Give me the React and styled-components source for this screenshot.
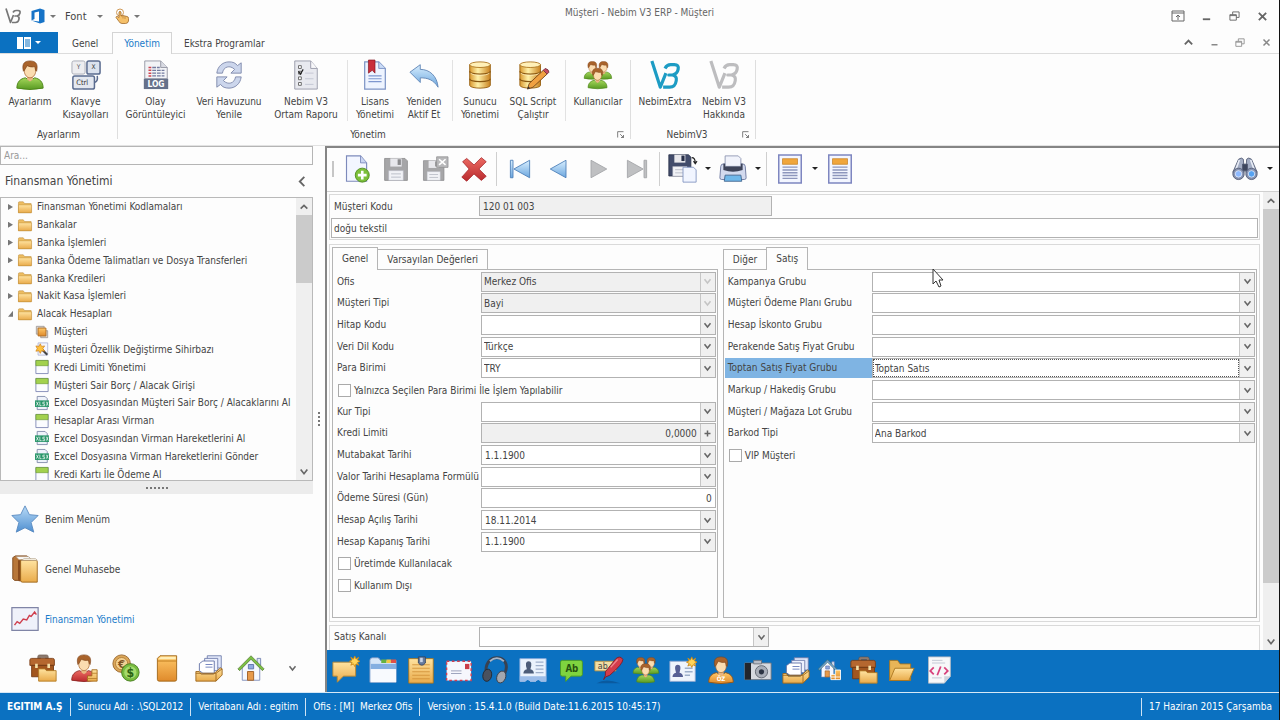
import React, { useState } from "react"
import styled, { createGlobalStyle, css } from "styled-components"

const ribbonGroups = [
    {
        title: "Ayarlarım",
        sections: [[
            { icon: "user", lines: ["Ayarlarım"], width: 54 },
            { icon: "keys", lines: ["Klavye", "Kısayolları"], width: 57 },
        ]],
    },
    {
        title: "Yönetim",
        launcher: true,
        sections: [
            [
                { icon: "log", lines: ["Olay", "Görüntüleyici"], width: 69 },
                { icon: "refresh", lines: ["Veri Havuzunu", "Yenile"], width: 78 },
                { icon: "report", lines: ["Nebim V3", "Ortam Raporu"], width: 76 },
            ],
            [
                { icon: "license", lines: ["Lisans", "Yönetimi"], width: 48 },
                { icon: "undo", lines: ["Yeniden", "Aktif Et"], width: 50 },
            ],
            [
                { icon: "database", lines: ["Sunucu", "Yönetimi"], width: 48 },
                { icon: "databaseEdit", lines: ["SQL Script", "Çalıştır"], width: 58 },
            ],
            [{ icon: "users", lines: ["Kullanıcılar"], width: 58 }],
        ],
    },
    {
        title: "NebimV3",
        launcher: true,
        sections: [[
            { icon: "v3Blue", lines: ["NebimExtra"], width: 62 },
            { icon: "v3Gray", lines: ["Nebim V3", "Hakkında"], width: 56 },
        ]],
    },
]

const treeItems = [
    { icon: "folder", text: "Finansman Yönetimi Kodlamaları" },
    { icon: "folder", text: "Bankalar" },
    { icon: "folder", text: "Banka İşlemleri" },
    { icon: "folder", text: "Banka Ödeme Talimatları ve Dosya Transferleri" },
    { icon: "folder", text: "Banka Kredileri" },
    { icon: "folder", text: "Nakit Kasa İşlemleri" },
    { icon: "folder", text: "Alacak Hesapları", open: true },
    { icon: "cards", text: "Müşteri", child: true },
    { icon: "wizard", text: "Müşteri Özellik Değiştirme Sihirbazı", child: true },
    { icon: "form", text: "Kredi Limiti Yönetimi", child: true },
    { icon: "form", text: "Müşteri Sair Borç / Alacak Girişi", child: true },
    { icon: "xlsx", text: "Excel Dosyasından Müşteri Sair Borç / Alacaklarını Al", child: true },
    { icon: "form", text: "Hesaplar Arası Virman", child: true },
    { icon: "xlsx", text: "Excel Dosyasından Virman Hareketlerini Al", child: true },
    { icon: "xlsx", text: "Excel Dosyasına Virman Hareketlerini Gönder", child: true },
    { icon: "form", text: "Kredi Kartı İle Ödeme Al", child: true },
]

const navItems = [
    { icon: "star", text: "Benim Menüm" },
    { icon: "books", text: "Genel Muhasebe" },
    { icon: "chart", text: "Finansman Yönetimi", active: true },
]

const shortcuts = ["briefcase", "userRed", "coins", "book", "cardbox", "house"]

const dockIcons = [
    "note", "window", "notepad", "envelope", "headset", "contact", "abBubble", "marker", "users",
    "contactNew", "userOrange", "camera", "cardbox", "houseCoins", "briefcase", "folderOpen", "code",
]

const leftFields = [
    { label: "Ofis", type: "select", value: "Merkez Ofis", disabled: true },
    { label: "Müşteri Tipi", type: "select", value: "Bayi", disabled: true },
    { label: "Hitap Kodu", type: "select", value: "" },
    { label: "Veri Dil Kodu", type: "select", value: "Türkçe" },
    { label: "Para Birimi", type: "select", value: "TRY" },
    { label: "Yalnızca Seçilen Para Birimi İle İşlem Yapılabilir", type: "check" },
    { label: "Kur Tipi", type: "select", value: "" },
    { label: "Kredi Limiti", type: "number", value: "0,0000", disabled: true, button: "plus" },
    { label: "Mutabakat Tarihi", type: "text", value: "1.1.1900", button: "down" },
    { label: "Valor Tarihi Hesaplama Formülü", type: "select", value: "" },
    { label: "Ödeme Süresi (Gün)", type: "number", value: "0" },
    { label: "Hesap Açılış Tarihi", type: "text", value: "18.11.2014", button: "down" },
    { label: "Hesap Kapanış Tarihi", type: "text", value: "1.1.1900", button: "down" },
    { label: "Üretimde Kullanılacak", type: "check" },
    { label: "Kullanım Dışı", type: "check" },
]

const rightFields = [
    { label: "Kampanya Grubu", type: "select", value: "" },
    { label: "Müşteri Ödeme Planı Grubu", type: "select", value: "" },
    { label: "Hesap İskonto Grubu", type: "select", value: "" },
    { label: "Perakende Satış Fiyat Grubu", type: "select", value: "" },
    { label: "Toptan Satış Fiyat Grubu", type: "select", value: "Toptan Satıs", selected: true },
    { label: "Markup / Hakediş Grubu", type: "select", value: "" },
    { label: "Müşteri / Mağaza Lot Grubu", type: "select", value: "" },
    { label: "Barkod Tipi", type: "select", value: "Ana Barkod" },
    { label: "VIP Müşteri", type: "check" },
]

function Gradient({ id, from, to }) {
    return (
        <linearGradient id={id} x1="0" y1="0" x2="0" y2="1">
            <stop offset="0" stopColor={from} />
            <stop offset="1" stopColor={to} />
        </linearGradient>
    )
}

function Person({ body, edge, x = 0, y = 0, scale = 1 }) {
    return (
        <g transform={`translate(${x} ${y}) scale(${scale})`}>
            <path d="M2 30c0-7 4-10 9-11l5 3 5-3c5 1 9 4 9 11q-14 3-28 0z" fill={body} stroke={edge} />
            <path d="M13 16h6v5l-3 2-3-2z" fill="#e9b782" />
            <path d="M10 8c0-4 12-4 12 0v4c0 4-3 7-6 7s-6-3-6-7z" fill="#fbdcb0" stroke="#a8642c" strokeWidth=".8" />
            <path d="M9 12C7 4 10 1 16 1s9 3 7 11l-1-1-1-4c-3 1-6 0-8-1l-3 5z" fill="#a9632b" stroke="#7d431a" strokeWidth=".7" />
        </g>
    )
}

function House({ x = 0, y = 0, scale = 1, roof }) {
    return (
        <g transform={`translate(${x} ${y}) scale(${scale})`}>
            <path d="M23 5h4v8h-4z" fill="#dfe6f5" stroke="#6f7fae" />
            <path d="M6 15 16 5l10 10v15H6z" fill="#f5f8ff" stroke="#7b8bb8" />
            <path d="M1 17 16 2l15 15-2 2L16 6 3 19z" fill={roof} stroke="#55743a" strokeWidth=".8" />
            <path d="M13 12h6v5h-6z" fill="#8fa9df" stroke="#5a70a8" />
            <path d="M12 20h7v10h-7z" fill="#e79a4b" stroke="#9c5a20" />
        </g>
    )
}

function Cylinder() {
    return (
        <g>
            <path d="M5 5v22c0 4 22 4 22 0V5z" fill="url(#goldSide)" stroke="#9a6417" />
            <ellipse cx="16" cy="5" rx="11" ry="3" fill="#fff0b8" stroke="#b07a25" />
            <path d="M5 12c0 4 22 4 22 0M5 20c0 4 22 4 22 0" fill="none" stroke="#8a5710" strokeWidth="1.4" />
            <path d="M6 14c3 3 17 3 20 0" fill="none" stroke="#fff3c4" strokeWidth=".8" />
        </g>
    )
}

function V3Shape({ color }) {
    return (
        <g fill="none" stroke={color} strokeWidth="3.4" strokeLinejoin="round">
            <path d="M2 1l9 28 6-15" />
            <path d="M16 9q2-4 6-4h4q5 0 4 5-1 5-6 6h-4 4q5 1 4 6-1 7-7 7h-7" />
        </g>
    )
}

function Disk({ fill, edge, children }) {
    return (
        <g>
            <path d="M2 3h25l3 3v24H2z" fill={fill} stroke={edge} />
            <path d="M9 3h14v10H9z" fill="#e8e8ec" />
            <path d="M18 4h4v7h-4z" fill={edge} />
            <path d="M7 18h18v12H7z" fill="#f1f2f6" stroke="#b5b7c2" strokeWidth=".6" />
            <path d="M10 22h12M10 26h12" stroke="#b0b4bf" />
            {children}
        </g>
    )
}

function Sheet() {
    return (
        <g>
            <path d="M4 1h24v30H4z" fill="#f3f6ff" stroke="#7e86c0" strokeWidth="1.6" />
            <path d="M8 5h16v6H8z" fill="#f0a63c" stroke="#c27a1c" strokeWidth=".7" />
            <path d="M8 14h16M8 17h16M8 20h16M8 23h16M8 26h16" stroke="#8d96bd" strokeWidth="1.5" />
        </g>
    )
}

function Badge({ x, y }) {
    return <path transform={`translate(${x} ${y})`} d="M0-6 1.5-2.5 4.5-4.5 3-1.5 6 0 3 1.5 4.5 4.5 1.5 3 0 6-1.5 3-4.5 4.5-3 1.5-6 0-3-1.5-4.5-4.5-1.5-2.5z" fill="#ffd45a" stroke="#c98715" />
}

const artwork = {
    user: <Person body="url(#green)" edge="#4d8419" />,
    userRed: (
        <g>
            <Person body="url(#red)" edge="#8e2320" />
            <path d="M20 25h5v-7h6v13H20z" fill="url(#gold)" stroke="#a26a1c" />
            <path d="M20 28h11M25 22h6" stroke="#b9812f" />
        </g>
    ),
    userOrange: (
        <g>
            <Person body="url(#orange)" edge="#99530f" />
            <text x="16" y="29" fontSize="7" fontWeight="bold" textAnchor="middle" fill="#fff">ÖZ</text>
        </g>
    ),
    users: (
        <g>
            <Person body="url(#green)" edge="#4d8419" scale={0.62} y={1} />
            <Person body="url(#green)" edge="#4d8419" scale={0.62} x={12} y={1} />
            <Person body="url(#green)" edge="#4d8419" scale={0.72} x={4} y={8} />
        </g>
    ),
    keys: (
        <g>
            <rect x="1" y="1" width="14" height="14" rx="2" fill="#ededf0" stroke="#a9abb5" />
            <rect x="17" y="1" width="14" height="14" rx="2" fill="#dbe2ee" stroke="#5b6c90" strokeWidth="1.6" />
            <rect x="2" y="17" width="23" height="14" rx="2" fill="#e4e8f0" stroke="#5b6c90" strokeWidth="1.6" />
            <path d="M25 24q4-1 3-7" fill="none" stroke="#5b6c90" strokeWidth="1.6" />
            <text x="8" y="10" fontSize="7" textAnchor="middle" fill="#555">Y</text>
            <text x="24" y="10" fontSize="7" textAnchor="middle" fill="#333">X</text>
            <text x="12" y="27" fontSize="8" textAnchor="middle" fill="#333">Ctrl</text>
        </g>
    ),
    log: (
        <g>
            <path d="M4 1h17l7 7v12H4z" fill="#f2f3f6" stroke="#9699a5" />
            <path d="M21 1v7h7" fill="#d8dae2" stroke="#9699a5" />
            <path d="M8 8h3M8 11h3M8 14h3M8 17h3" stroke="#cf4450" strokeWidth="1.6" />
            <path d="M12 8h8M12 11h13M12 14h13M12 17h13" stroke="#737b9f" strokeWidth="1.4" strokeDasharray="4 1" />
            <path d="M3 20h26v11H3z" fill="#66718a" />
            <text x="16" y="29" fontSize="9" fontWeight="bold" textAnchor="middle" fill="#fff">LOG</text>
        </g>
    ),
    refresh: (
        <g fill="#ccd6ec" stroke="#808bad" strokeLinejoin="round">
            <path d="M3 14C4 6 10 2 16 2c4 0 7 1 9 4l4-3v11H18l4-4c-5-5-12-3-13 4z" />
            <path d="M29 18c-1 8-7 12-13 12-4 0-7-1-9-4l-4 3V18h11l-4 4c5 5 12 3 13-4z" />
        </g>
    ),
    report: (
        <g>
            <path d="M4 1h17l7 8v22H4z" fill="#e8e9ef" stroke="#9a9cab" />
            <path d="M21 1v8h7" fill="#f8f8fa" stroke="#9a9cab" />
            <path d="M8 6h3v3H8zM8 12h3v3H8zM8 18h3v3H8zM8 24h3v3H8z" fill="#fff" stroke="#666" />
            <path d="M8 12l2 3 3-5" fill="none" stroke="#222" strokeWidth="1.3" />
            <path d="M15 14h9M15 20h9M15 26h9" stroke="#c3c6d3" />
        </g>
    ),
    license: (
        <g>
            <path d="M5 2h15l7 7v22H5z" fill="#eef4ff" stroke="#7d94c5" strokeWidth="1.3" />
            <path d="M20 2v7h7" fill="#cadbf6" stroke="#7d94c5" />
            <path d="M9 17h14M9 20h14M9 23h14" stroke="#7e97cf" strokeWidth="1.3" />
            <path d="M9 0h7v14l-3-3-4 3z" fill="#c92f3c" stroke="#84131e" strokeWidth=".7" />
        </g>
    ),
    undo: <path d="M1 13 12 5v5c10 0 18 7 19 19-5-8-11-10-19-10v5z" fill="url(#blue)" stroke="#6288b8" strokeLinejoin="round" />,
    database: <Cylinder />,
    databaseEdit: (
        <g>
            <g transform="translate(-3 0)"><Cylinder /></g>
            <path d="M27 11l4 4-15 14-6 2 2-6z" fill="#f0a142" stroke="#7c4a19" />
            <path d="M27 11l2-2q4 1 4 4l-2 2z" fill="#c84d61" stroke="#7a3a44" />
            <path d="M11 28l-1 3 3-1z" fill="#333" />
        </g>
    ),
    v3Blue: <V3Shape color="#1d9cc4" />,
    v3Gray: <V3Shape color="#bdbdbf" />,
    v3Dark: <V3Shape color="#777" />,
    office: <path d="M3 6 20 1l9 3v24l-9 3L3 25l15 2V7L9 9v13l-6 3z" fill="#1673c7" />,
    touch: (
        <g>
            <circle cx="12" cy="9" r="7" fill="none" stroke="#d09a57" strokeWidth="2" />
            <path d="M10 19V8q2-3 4 0v8l4-1 4 1 4 1q3 0 3 4v5q-1 5-6 5h-7q-4 0-6-4l-6-8q0-3 3-2z" fill="#f5c069" stroke="#9c6424" strokeWidth="1.5" />
            <path d="M18 16v5M22 17v5" stroke="#9c6424" />
        </g>
    ),
    folder: (
        <g>
            <path d="M1 6q0-2 2-2h9l3 4h15v21H1z" fill="#edbd61" stroke="#b07b25" />
            <path d="M1 11h30v18H1z" fill="url(#gold)" stroke="#b98228" />
        </g>
    ),
    folderOpen: (
        <g>
            <path d="M3 5h9l3 4h12v19H3z" fill="#e8b557" stroke="#a8731d" />
            <path d="M9 14h22l-6 14H3z" fill="url(#gold)" stroke="#a8731d" />
        </g>
    ),
    cards: (
        <g>
            <path d="M3 3h18v18H3z" fill="#d8d3cf" stroke="#8e8580" strokeWidth="1.5" />
            <path d="M13 13h16v16H13z" fill="#d8d3cf" stroke="#8e8580" strokeWidth="1.5" />
            <path d="M7 7h18v18H7z" fill="url(#orange)" stroke="#b06b20" strokeWidth="2" />
        </g>
    ),
    wizard: (
        <g>
            <path d="M7 2h22v28H7z" fill="#f4f6ff" stroke="#9aa2c7" strokeWidth="1.5" />
            <path d="M16 17l12 12" stroke="#444" strokeWidth="5" />
            <path d="M12 4l3 6 7-1-4 6 4 6-7-1-3 6-3-6-7 1 3-6-3-6 7 1z" fill="#ffc23d" stroke="#cb7a12" strokeWidth="1.5" />
        </g>
    ),
    form: (
        <g>
            <path d="M2 1h28v30H2z" fill="#fbfcff" stroke="#7d86b4" strokeWidth="2" />
            <path d="M2 1h28v12H2z" fill="#a2d14e" stroke="#6b9a30" strokeWidth="1.5" />
        </g>
    ),
    xlsx: (
        <g>
            <path d="M5 1h18l5 5v25H5z" fill="#eef2fa" stroke="#7e88a8" strokeWidth="2" />
            <path d="M0 10h32v15H0z" fill="#279568" />
            <path d="M3 13l5 9M8 13l-5 9M11 13v9h4M23 14h-5v4h4v4h-5M26 13l4 9M30 13l-4 9" fill="none" stroke="#fff" strokeWidth="1.6" />
        </g>
    ),
    star: <path d="M16 1l5 10 10 1-8 8 3 11-10-5-10 5 3-11-8-8 10-1z" fill="url(#blueDeep)" stroke="#5788bf" strokeLinejoin="round" />,
    books: (
        <g>
            <path d="M2 3l3-2h13l4 3v25H4l-2-2z" fill="#b8773a" stroke="#7d4719" />
            <path d="M6 2h14l3 3H9z" fill="#fff" stroke="#b3a89a" strokeWidth=".6" />
            <path d="M8 6h5v24H9q-1-1-1-3z" fill="#8b4c1d" />
            <path d="M11 6h18q1 0 1 2v23H13q-2 0-2-2z" fill="url(#gold)" stroke="#9a6219" />
            <path d="M12 6l3-2h13l2 2z" fill="#fdf8ec" stroke="#a8987c" strokeWidth=".6" />
        </g>
    ),
    chart: (
        <g>
            <path d="M1 3h30v26H1z" fill="#eff1fa" stroke="#8085a6" strokeWidth="1.4" />
            <path d="M4 23l3-4 3 2 4-5 4 1 3-5 2 1 4-5 2 3" fill="none" stroke="#cf3d4c" strokeWidth="1.6" />
        </g>
    ),
    briefcase: (
        <g>
            <path d="M10 7V3q0-2 2-2h8q2 0 2 2v4h-3V4h-6v3z" fill="#8c7a6f" stroke="#5d4a3f" strokeWidth=".6" />
            <path d="M1 7q0-2 2-2h24q2 0 2 2v6H1z" fill="#b5672f" stroke="#7b3e16" />
            <path d="M3 13h25v13H3z" fill="#a2561f" stroke="#723811" />
            <path d="M7 11h3v5H7zM21 11h3v5h-3z" fill="#f4dfa7" />
            <path d="M11 17h7l2 2h11v12H11z" fill="url(#gold)" stroke="#b27a22" />
        </g>
    ),
    coins: (
        <g>
            <circle cx="11" cy="11" r="10" fill="#dba658" stroke="#936026" />
            <circle cx="11" cy="11" r="7" fill="#f3d193" stroke="#b07c36" />
            <text x="11" y="16" fontSize="13" fontWeight="bold" textAnchor="middle" fill="#7e5424">€</text>
            <circle cx="21" cy="21" r="10" fill="#77bb3f" stroke="#437a1c" />
            <circle cx="21" cy="21" r="7" fill="#a5db6c" />
            <text x="21" y="26" fontSize="14" fontWeight="bold" textAnchor="middle" fill="#2c6314">$</text>
        </g>
    ),
    book: (
        <g>
            <path d="M5 5l3-3h19v27q0 2-2 2H7q-2 0-2-2z" fill="url(#orange)" stroke="#9c6215" />
            <path d="M6 6l3-3h17v3z" fill="#ffeeb8" />
            <path d="M5 8h22" stroke="#b97618" />
        </g>
    ),
    cardbox: (
        <g>
            <path d="M14 2h16v14H14z" fill="#e2e8fa" stroke="#6e7caa" />
            <path d="M11 5h15v14H11z" fill="#edf1fd" stroke="#6e7caa" />
            <path d="M9 8h13v14H9l-4-3v-8z" fill="#fff" stroke="#5d6da2" />
            <path d="M12 12h8M12 15h8" stroke="#6678b8" />
            <path d="M1 20h4l2 3h14l8-7 2 1v7l-7 7H1z" fill="url(#gold)" stroke="#9a6419" />
            <path d="M1 22h23v9M24 22l7-5" fill="none" stroke="#9a6419" />
        </g>
    ),
    house: <House roof="#7cc142" />,
    houseCoins: (
        <g>
            <House roof="#6d9fd8" scale={0.7} x={2} y={3} />
            <path d="M17 21h5v-5h6v11H17z" fill="url(#orange)" stroke="#fff" />
            <path d="M17 24h11M22 21v6" stroke="#fff" />
        </g>
    ),
    newDoc: (
        <g>
            <path d="M4 1h16l7 8v21H4z" fill="#f3f6ff" stroke="#7d8abb" strokeWidth="1.3" />
            <path d="M20 1v8h7" fill="#cbd6f3" stroke="#7d8abb" />
            <circle cx="22" cy="23" r="8" fill="#7cbf3a" stroke="#4d8a1d" />
            <path d="M22 18v10M17 23h10" stroke="#fff" strokeWidth="3" />
        </g>
    ),
    save: <Disk fill="#a6a6a8" edge="#8b8b8d" />,
    saveClose: (
        <g>
            <g transform="translate(0 3) scale(.9)"><Disk fill="#a6a6a8" edge="#8b8b8d" /></g>
            <path d="M18 1h14v13H18z" fill="#b8b8ba" stroke="#929294" />
            <path d="M21 4l8 7M29 4l-8 7" stroke="#fff" strokeWidth="2" />
        </g>
    ),
    remove: <path d="M2 7 7 3l9 8 9-9 6 5-9 9 9 9-6 5-9-8-9 9-6-5 9-10z" fill="url(#red)" stroke="#a7262a" strokeLinejoin="round" />,
    first: (
        <g fill="url(#blue)" stroke="#4c7fb8">
            <path d="M5 6h3v20H5z" />
            <path d="M27 6v20L9 16z" />
        </g>
    ),
    prev: <path d="M24 6v20L6 16z" fill="url(#blue)" stroke="#4c7fb8" />,
    next: <path d="M8 6v20l18-10z" fill="#bfc0c2" stroke="#a4a5a8" />,
    last: (
        <g fill="#bfc0c2" stroke="#a4a5a8">
            <path d="M24 6h3v20h-3z" />
            <path d="M5 6v20l18-10z" />
        </g>
    ),
    saveCopy: (
        <g>
            <g transform="translate(-2 -3) scale(.9)"><Disk fill="#424c6b" edge="#272f48" /></g>
            <path d="M16 14h12l3 3v14H16z" fill="#f1f5ff" stroke="#8193c0" />
            <path d="M26 3q4 0 4 6m-2-2 2 3 2-3" fill="none" stroke="#222" strokeWidth="1.3" />
        </g>
    ),
    print: (
        <g>
            <path d="M2 13q0-3 4-3h20q4 0 4 3l1 13q0 2-2 2H3q-2 0-2-2z" fill="#d3daee" stroke="#67729a" />
            <path d="M7 1h15l3 3v9H7z" fill="#f1f3fb" stroke="#8c93b0" />
            <path d="M5 10h2v3h18v-3h2v7q-11 4-22 0z" fill="#3e4459" />
            <path d="M7 23h18l1 7H6z" fill="#70b8ea" stroke="#41638d" />
        </g>
    ),
    sheet: <Sheet />,
    binoculars: (
        <g stroke="#4c556e">
            <path d="M8 4q4-3 6 0l1 16H1z" fill="#a3adc4" />
            <path d="M24 4q-4-3-6 0l-1 16h14z" fill="#a3adc4" />
            <path d="M13 10h6v8h-6z" fill="#3d465e" />
            <path d="M9 5L5 16M23 5l4 11" stroke="#e8ecf5" strokeWidth="2" />
            <circle cx="8" cy="22" r="7" fill="#8691ae" />
            <circle cx="24" cy="22" r="7" fill="#8691ae" />
            <circle cx="8" cy="22" r="4" fill="#8db9ff" stroke="#e3eafa" />
            <circle cx="24" cy="22" r="4" fill="#56a3f2" stroke="#e3eafa" />
        </g>
    ),
    note: (
        <g>
            <path d="M1 7h26v16H13l-7 7v-7H1z" fill="url(#gold)" stroke="#b8862e" />
            <Badge x={26} y={6} />
        </g>
    ),
    window: (
        <g>
            <path d="M1 5q0-3 3-3h6q2 0 3 3h18v25H1z" fill="#d7e6f8" stroke="#7996c4" />
            <path d="M14 4h6v4h-6z" fill="#65b240" />
            <path d="M20 4h5v4h-5z" fill="#f0c944" />
            <path d="M25 4h6v4h-6z" fill="#df5149" />
            <path d="M2 9h29v6H2z" fill="#85afe1" />
            <path d="M2 15h29v15H2z" fill="#f8fafe" />
        </g>
    ),
    notepad: (
        <g>
            <path d="M2 3h28v28H2z" fill="url(#gold)" stroke="#a87419" />
            <path d="M6 10h20M6 14h20M6 18h20M6 22h20M6 26h20" stroke="#d3933a" />
            <path d="M13 1h8v7q-4 5-8 0z" fill="#667b9f" stroke="#36465f" />
            <path d="M15 2h3v5h-3z" fill="#c7d4e9" />
        </g>
    ),
    envelope: (
        <g>
            <path d="M3 6h28v22H3z" fill="#f6f7fd" stroke="#d53e50" strokeWidth="1.6" strokeDasharray="3 3" />
            <path d="M24 9h5v6h-5z" fill="#c93c47" />
            <path d="M8 17h12M8 20h12" stroke="#9199b5" />
        </g>
    ),
    headset: (
        <g>
            <path d="M5 20C3 9 9 2 17 2s14 7 9 18" fill="none" stroke="#394150" strokeWidth="3.4" />
            <path d="M9 6q8-7 16 0" fill="none" stroke="#a5b4c8" strokeWidth="2" />
            <ellipse cx="6" cy="22" rx="5" ry="7" fill="#4a515e" stroke="#252932" transform="rotate(12 6 22)" />
            <ellipse cx="22" cy="24" rx="5" ry="7" fill="#a2a7af" stroke="#3a3f4a" transform="rotate(22 22 24)" />
        </g>
    ),
    contact: (
        <g>
            <path d="M1 3h30v26h-6q-3-4-6 0h-6q-3-4-6 0H1z" fill="#eaf2fc" stroke="#8eaddb" />
            <path d="M1 23h30v6h-6q-3-4-6 0h-6q-3-4-6 0H1z" fill="#9dbde8" />
            <path d="M5 20q0-4 4-5-3-9 2-9t2 9q4 1 4 5z" fill="#4c5c78" />
            <path d="M19 7h9M19 11h9M19 15h9M19 19h9" stroke="#9eafca" strokeWidth="1.5" />
        </g>
    ),
    contactNew: (
        <g>
            <path d="M1 6h29v23H1z" fill="#eff4fc" stroke="#91a8cf" />
            <path d="M4 24q0-4 4-5-3-9 2-9t2 9q4 1 4 5z" fill="#565f94" />
            <path d="M18 14h9M18 18h9M18 22h6" stroke="#9eafca" strokeWidth="1.5" />
            <Badge x={26} y={7} />
        </g>
    ),
    abBubble: (
        <g>
            <path d="M6 5h21q2 0 2 2v14q0 2-2 2H16l-6 6v-6H6q-2 0-2-2V7q0-2 2-2z" fill="#7fd43f" stroke="#4a9a20" />
            <text x="17" y="18" fontSize="11" fontWeight="bold" textAnchor="middle" fill="#27520f">Ab</text>
        </g>
    ),
    marker: (
        <g>
            <path d="M1 6h24v11H1z" fill="#f3dfa4" stroke="#b8913d" />
            <text x="10" y="15" fontSize="10" textAnchor="middle" fill="#444">ab</text>
            <path d="M3 31q10-6 27 0z" fill="#0a5a9f" />
            <path d="M13 18 25 3q5-4 8 1 0 5-15 18l-5 2-2 3 2-5z" fill="#d33c4a" stroke="#7f1923" />
            <path d="M19 13 27 4" stroke="#ef8790" strokeWidth="1.5" />
        </g>
    ),
    camera: (
        <g>
            <path d="M1 8h30v19H1z" fill="#d6d9df" stroke="#6e737e" />
            <path d="M1 8h7v19H1z" fill="#22252b" />
            <path d="M11 5h9v4h-9z" fill="#b8bdc7" stroke="#6e737e" />
            <circle cx="20" cy="18" r="7" fill="#a9aeb8" stroke="#5d626d" />
            <circle cx="20" cy="18" r="3" fill="#2c3443" />
        </g>
    ),
    code: (
        <g>
            <path d="M4 1h25v22l-7 8H4z" fill="#f7f8f9" stroke="#b4bac5" />
            <path d="M22 31v-8h7z" fill="#ced3db" />
            <path d="M8 5h12M8 8h15M8 25h11" stroke="#bfc4cf" />
            <path d="M10 13l-4 4 4 4M18 12l-4 10M22 13l4 4-4 4" fill="none" stroke="#d8437c" strokeWidth="2" />
        </g>
    ),
}

function Icon({ name, size = 28 }) {
    return <svg width={size} height={size} viewBox="0 0 32 32" overflow="visible" aria-hidden="true">{artwork[name]}</svg>
}

const glyphs = {
    down: "M2 3l4 5 4-5",
    up: "M2 8l4-4 4 4",
    left: "M8 1L3 6l5 5",
    plus: "M6 2v8M2 6h8",
    minimize: "M2 9h8",
    restore: "M4 4V1h7v6H8M1 4h7v6H1zM1 5h7",
    close: "M2 2l8 8M10 2l-8 8",
    ribbon: "M0 1h12v10H0zM0 3h12M6 10V5M4 7l2-2 2 2",
    launcher: "M2 9V2h7M5 5l4 4M9 6v3H6",
}

function Glyph({ name, size = 12, weight = 2, color = "#666" }) {
    return (
        <svg width={size} height={size} viewBox="0 0 12 12" aria-hidden="true" overflow="visible">
            <path d={glyphs[name]} fill="none" stroke={color} strokeWidth={weight} />
        </svg>
    )
}

function TitleBar() {
    return (
        <TitleRow>
            <QuickAccess>
                <QuickButton aria-label="Nebim V3"><Icon name="v3Dark" size={16} /></QuickButton>
                <QuickButton aria-label="Office"><Icon name="office" size={16} /><Caret /></QuickButton>
                <QuickButton>Font<FontCaret /></QuickButton>
                <QuickButton aria-label="Dokunmatik"><Icon name="touch" size={16} /><Caret /></QuickButton>
            </QuickAccess>
            <WindowTitle>Müşteri - Nebim V3 ERP - Müşteri</WindowTitle>
            <WindowButtons>
                <WindowButton aria-label="Şerit"><Glyph name="ribbon" weight={1} /></WindowButton>
                <WindowButton aria-label="Küçült"><Glyph name="minimize" size={11} /></WindowButton>
                <WindowButton aria-label="Geri Yükle"><Glyph name="restore" size={11} weight={1} /></WindowButton>
                <WindowButton aria-label="Kapat"><Glyph name="close" size={11} /></WindowButton>
            </WindowButtons>
        </TitleRow>
    )
}

function RibbonTabs() {
    return (
        <TabRow>
            <AppButton aria-label="Menü">
                <svg width="14" height="12" viewBox="0 0 14 12">
                    <path d="M0 0h6v12H0zM7 0h7v12H7z" fill="#fff" />
                    <path d="M8 3h5M8 5h5M8 7h5M8 9h5" stroke="#0b71c1" />
                </svg>
                <Caret $light />
            </AppButton>
            <RibbonTab>Genel</RibbonTab>
            <RibbonTab $active>Yönetim</RibbonTab>
            <RibbonTab>Ekstra Programlar</RibbonTab>
            <ChildButtons>
                <ChildButton aria-label="Daralt"><Glyph name="up" size={11} /></ChildButton>
                <ChildButton aria-label="Küçült"><Glyph name="minimize" size={9} color="#888" /></ChildButton>
                <ChildButton aria-label="Geri Yükle"><Glyph name="restore" size={10} weight={1} color="#888" /></ChildButton>
                <ChildButton aria-label="Kapat"><Glyph name="close" size={9} color="#888" /></ChildButton>
            </ChildButtons>
        </TabRow>
    )
}

function Ribbon() {
    return (
        <RibbonBar>
            {ribbonGroups.map(group => (
                <RibbonGroup key={group.title}>
                    <RibbonSections>
                        {group.sections.map((section, i) => (
                            <RibbonSection key={i}>
                                {section.map(item => (
                                    <RibbonButton key={item.icon} $width={item.width}>
                                        <Icon name={item.icon} size={30} />
                                        <RibbonText>{item.lines.map(line => <span key={line}>{line}</span>)}</RibbonText>
                                    </RibbonButton>
                                ))}
                            </RibbonSection>
                        ))}
                    </RibbonSections>
                    <GroupCaption>
                        <span>{group.title}</span>
                        {group.launcher && <Launcher aria-label={group.title}><Glyph name="launcher" size={10} weight={1} /></Launcher>}
                    </GroupCaption>
                </RibbonGroup>
            ))}
        </RibbonBar>
    )
}

function Sidebar() {
    return (
        <SidePanel>
            <SearchInput type="text" placeholder="Ara..." aria-label="Ara" />
            <SideHeader>
                <SideTitle>Finansman Yönetimi</SideTitle>
                <PlainButton aria-label="Daralt"><Glyph name="left" size={11} /></PlainButton>
            </SideHeader>
            <TreeBox>
                <TreeList>
                    {treeItems.map(item => (
                        <TreeRow key={item.text} $child={item.child}>
                            {!item.child && <Expander $open={item.open} />}
                            <Icon name={item.icon} size={14} />
                            <span>{item.text}</span>
                        </TreeRow>
                    ))}
                </TreeList>
                <ScrollTrack>
                    <ScrollButton aria-label="Yukarı"><Glyph name="up" size={10} /></ScrollButton>
                    <TreeThumb />
                    <ScrollButton aria-label="Aşağı"><Glyph name="down" size={10} /></ScrollButton>
                </ScrollTrack>
            </TreeBox>
            <NavSplitter><Dots /></NavSplitter>
            <NavList>
                {navItems.map(item => (
                    <NavLink key={item.text} href="#" $active={item.active}>
                        <Icon name={item.icon} />
                        {item.text}
                    </NavLink>
                ))}
            </NavList>
            <ShortcutRow>
                {shortcuts.map(name => <PlainButton key={name} aria-label={name}><Icon name={name} /></PlainButton>)}
                <PlainButton aria-label="Diğer"><Glyph name="down" size={9} /></PlainButton>
            </ShortcutRow>
        </SidePanel>
    )
}

function MainToolbar() {
    return (
        <ToolbarRow>
            <Grip />
            <ToolButton aria-label="Yeni"><Icon name="newDoc" /></ToolButton>
            <ToolButton aria-label="Kaydet"><Icon name="save" size={26} /></ToolButton>
            <ToolButton aria-label="Kaydet ve Kapat"><Icon name="saveClose" size={26} /></ToolButton>
            <ToolButton aria-label="Sil"><Icon name="remove" size={26} /></ToolButton>
            <ToolDivider />
            <ToolButton aria-label="İlk"><Icon name="first" /></ToolButton>
            <ToolButton aria-label="Önceki"><Icon name="prev" /></ToolButton>
            <ToolButton aria-label="Sonraki"><Icon name="next" /></ToolButton>
            <ToolButton aria-label="Son"><Icon name="last" /></ToolButton>
            <ToolDivider />
            <ToolButton aria-label="Farklı Kaydet"><Icon name="saveCopy" /></ToolButton>
            <DropButton aria-label="Kaydetme seçenekleri"><Caret $dark /></DropButton>
            <ToolButton aria-label="Yazdır"><Icon name="print" /></ToolButton>
            <DropButton aria-label="Yazdırma seçenekleri"><Caret $dark /></DropButton>
            <ToolDivider />
            <ToolButton aria-label="Rapor"><Icon name="sheet" size={30} /></ToolButton>
            <DropButton aria-label="Rapor seçenekleri"><Caret $dark /></DropButton>
            <ToolButton aria-label="Belge"><Icon name="sheet" size={30} /></ToolButton>
            <Spacer />
            <ToolButton aria-label="Bul"><Icon name="binoculars" size={26} /></ToolButton>
            <DropButton aria-label="Bul seçenekleri"><Caret $dark /></DropButton>
        </ToolbarRow>
    )
}

function Field({ id, field }) {
    const [value, setValue] = useState(field.value)
    const [checked, setChecked] = useState(false)

    if (field.type === "check") {
        return (
            <CheckRow>
                <CheckBox id={id} type="checkbox" checked={checked} onChange={e => setChecked(e.target.checked)} />
                <label htmlFor={id}>{field.label}</label>
            </CheckRow>
        )
    }

    return (
        <FieldRow>
            <FieldLabel htmlFor={id} $selected={field.selected}>{field.label}</FieldLabel>
            <FieldBox $disabled={field.disabled}>
                {field.type === "select" ? (
                    <SelectBox id={id} value={value} disabled={field.disabled} $focused={field.selected} onChange={e => setValue(e.target.value)}>
                        <option value={field.value}>{field.value}</option>
                    </SelectBox>
                ) : (
                    <TextBox id={id} type="text" value={value} disabled={field.disabled} $right={field.type === "number"} onChange={e => setValue(e.target.value)} />
                )}
                {field.type === "select" && <ArrowBox><Glyph name="down" size={9} color={field.disabled ? "#c4c4c4" : "#666"} /></ArrowBox>}
                {field.button && <ArrowButton aria-label={field.label}><Glyph name={field.button} size={9} /></ArrowButton>}
            </FieldBox>
        </FieldRow>
    )
}

function CustomerForm() {
    return (
        <FormArea>
            <CodePanel>
                <CodeRow>
                    <CodeLabel htmlFor="code">Müşteri Kodu</CodeLabel>
                    <CodeBox><TextBox id="code" type="text" defaultValue="120 01 003" disabled /></CodeBox>
                </CodeRow>
                <FieldBox><NameBox type="text" defaultValue="doğu tekstil" aria-label="Müşteri Adı" /></FieldBox>
            </CodePanel>
            <DetailPanel>
                <Pane>
                    <PaneTabs>
                        <PaneTab $active>Genel</PaneTab>
                        <PaneTab>Varsayılan Değerleri</PaneTab>
                    </PaneTabs>
                    <PaneBody>
                        <LeftGrid>
                            {leftFields.map((field, i) => <Field key={field.label} id={`general-${i}`} field={field} />)}
                        </LeftGrid>
                    </PaneBody>
                </Pane>
                <Pane>
                    <PaneTabs>
                        <PaneTab>Diğer</PaneTab>
                        <PaneTab $active>Satış</PaneTab>
                    </PaneTabs>
                    <PaneBody>
                        <RightGrid>
                            {rightFields.map((field, i) => <Field key={field.label} id={`sales-${i}`} field={field} />)}
                        </RightGrid>
                    </PaneBody>
                    <Pointer width="12" height="20" viewBox="0 0 12 20">
                        <path d="M1 1v15l3-3 3 6 2-1-2-6h4z" fill="#fff" stroke="#333" />
                    </Pointer>
                </Pane>
            </DetailPanel>
            <ChannelPanel>
                <CodeLabel htmlFor="channel">Satış Kanalı</CodeLabel>
                <CodeBox $open>
                    <SelectBox id="channel"><option></option></SelectBox>
                    <ArrowBox><Glyph name="down" size={9} /></ArrowBox>
                </CodeBox>
            </ChannelPanel>
        </FormArea>
    )
}

export default function App() {
    return (
        <AppShell>
            <GlobalStyle />
            <GradientDefs width="0" height="0" aria-hidden="true">
                <defs>
                    <Gradient id="green" from="#a4d65a" to="#589a22" />
                    <Gradient id="red" from="#ec6a62" to="#b92a2e" />
                    <Gradient id="orange" from="#ffc868" to="#df8a2b" />
                    <Gradient id="gold" from="#ffe3a0" to="#e9ab4b" />
                    <Gradient id="blue" from="#d9efff" to="#6ba6de" />
                    <Gradient id="blueDeep" from="#b9dbf7" to="#4f8fd0" />
                    <linearGradient id="goldSide">
                        <stop offset="0" stopColor="#d9982f" />
                        <stop offset="0.4" stopColor="#fff1a8" />
                        <stop offset="1" stopColor="#c98220" />
                    </linearGradient>
                </defs>
            </GradientDefs>
            <TitleBar />
            <RibbonTabs />
            <Ribbon />
            <Workspace>
                <Sidebar />
                <Splitter><Dots $vertical /></Splitter>
                <Main>
                    <MainToolbar />
                    <FormScroller>
                        <CustomerForm />
                        <ScrollTrack>
                            <ScrollButton aria-label="Yukarı"><Glyph name="up" size={10} /></ScrollButton>
                            <FormThumb />
                            <ScrollButton aria-label="Aşağı"><Glyph name="down" size={10} /></ScrollButton>
                        </ScrollTrack>
                    </FormScroller>
                    <Dock>
                        {dockIcons.map(name => (
                            <DockButton key={name} aria-label={name} $narrow={name === "houseCoins"}><Icon name={name} /></DockButton>
                        ))}
                    </Dock>
                </Main>
            </Workspace>
            <StatusBar>
                <StatusItem $bold>EGITIM A.Ş</StatusItem>
                <StatusItem>Sunucu Adı : .\SQL2012</StatusItem>
                <StatusItem>Veritabanı Adı : egitim</StatusItem>
                <StatusItem>{"Ofis : [M]  Merkez Ofis"}</StatusItem>
                <StatusItem>Versiyon : 15.4.1.0 (Build Date:11.6.2015 10:45:17)</StatusItem>
                <Spacer />
                <StatusItem>17 Haziran 2015 Çarşamba</StatusItem>
            </StatusBar>
        </AppShell>
    )
}

const GlobalStyle = createGlobalStyle`
* {
    box-sizing: border-box;
}
body {
    margin: 0;
    background: #fdfdfd;
}
body, button, input, select {
    font-family: "DejaVu Sans Condensed", "DejaVu Sans", sans-serif;
    font-size: 10px;
    color: #444;
}
button {
    padding: 0;
    border: 0;
    background: none;
}
svg {
    display: block;
    flex: none;
}
`
const AppShell = styled.div`
display: flex;
flex-direction: column;
min-height: 100vh;
border-right: 1px solid #111;
`
const GradientDefs = styled.svg`
position: absolute;
`
const Spacer = styled.div`
flex: 1;
`
const PlainButton = styled.button`
display: flex;
align-items: center;
justify-content: center;
`
const Caret = styled.i`
border: 3px solid transparent;
border-bottom: 0;
border-top-color: ${p => (p.$light ? "#fff" : p.$dark ? "#222" : "#777")};
`

const TitleRow = styled.header`
display: grid;
grid-template-columns: 1fr auto 1fr;
height: 32px;
`
const QuickAccess = styled.div`
display: flex;
align-items: center;
gap: 9px;
padding-left: 5px;
`
const QuickButton = styled(PlainButton)`
gap: 4px;
font-size: 11px;
`
const FontCaret = styled(Caret)`
margin: 0 2px 0 6px;
`
const WindowTitle = styled.div`
padding-top: 6px;
line-height: 13px;
color: #666;
`
const WindowButtons = styled.div`
display: flex;
justify-content: flex-end;
padding-right: 3px;
`
const WindowButton = styled(PlainButton)`
width: 28px;
`

const TabRow = styled.nav`
display: flex;
height: 22px;
border-bottom: 1px solid #dcdcdc;
`
const AppButton = styled(PlainButton)`
width: 58px;
gap: 4px;
background: #0b71c1;
`
const RibbonTab = styled.button`
height: 22px;
padding: 0 11px;
border: 1px solid transparent;
border-bottom: 0;
&:nth-of-type(2) {
    padding: 0 13px;
}
${p => p.$active && css`
    border-color: #d4d4d4;
    background: #fdfdfd;
    color: #1a7bc9;
`}
`
const ChildButtons = styled.div`
display: flex;
margin-left: auto;
`
const ChildButton = styled(PlainButton)`
width: 26px;
`

const RibbonBar = styled.div`
display: flex;
height: 92px;
padding-top: 6px;
border-bottom: 1px solid #e2e2e2;
`
const RibbonGroup = styled.section`
display: flex;
flex-direction: column;
height: 79px;
border-right: 1px solid #dedede;
padding: 0 3px;
`
const RibbonSections = styled.div`
display: flex;
height: 62px;
`
const RibbonSection = styled.div`
display: flex;
padding-right: 3px;
& + & {
    padding-left: 3px;
    border-left: 1px solid #e2e2e2;
}
&:last-child {
    padding-right: 0;
}
`
const RibbonButton = styled.button`
display: flex;
flex-direction: column;
align-items: center;
gap: 5px;
width: ${p => p.$width}px;
`
const RibbonText = styled.span`
display: flex;
flex-direction: column;
align-items: center;
line-height: 13px;
white-space: nowrap;
`
const GroupCaption = styled.div`
display: flex;
justify-content: center;
align-items: center;
height: 12px;
margin-top: 8px;
span {
    flex: 1;
    text-align: center;
}
`
const Launcher = styled(PlainButton)`
width: 12px;
`

const Workspace = styled.div`
display: flex;
flex: 1;
`
const SidePanel = styled.aside`
display: flex;
flex-direction: column;
width: 313px;
`
const SearchInput = styled.input`
height: 19px;
padding: 0 3px;
border: 1px solid #b5b5b5;
background: #fdfdfd;
&::placeholder {
    color: #999;
}
`
const SideHeader = styled.div`
display: flex;
align-items: center;
justify-content: space-between;
height: 32px;
padding: 0 5px;
`
const SideTitle = styled.h2`
margin: 0;
font-size: 12px;
font-weight: normal;
`
const TreeBox = styled.div`
display: flex;
height: 284px;
overflow: hidden;
border: 1px solid #b9b9b9;
`
const TreeList = styled.ul`
display: grid;
grid-auto-rows: 1fr;
flex: 1;
height: 285px;
margin: 0;
padding: 0;
list-style: none;
`
const TreeRow = styled.li`
display: flex;
align-items: center;
gap: 5px;
padding-left: ${p => (p.$child ? 34 : 7)}px;
white-space: nowrap;
`
const Expander = styled.i`
width: 5px;
height: 6px;
background: #777;
clip-path: ${p => (p.$open ? "polygon(100% 0, 100% 100%, 0 100%)" : "polygon(0 0, 100% 50%, 0 100%)")};
`
const ScrollTrack = styled.div`
display: flex;
flex-direction: column;
width: 16px;
background: #efefef;
`
const ScrollButton = styled(PlainButton)`
width: 100%;
height: 17px;
`
const TreeThumb = styled.div`
height: 68px;
margin-bottom: auto;
background: #cbcbcb;
`
const NavSplitter = styled.div`
display: flex;
align-items: center;
justify-content: center;
height: 13px;
background: #ececec;
`
const Dots = styled.i`
width: ${p => (p.$vertical ? 2 : 22)}px;
height: ${p => (p.$vertical ? 14 : 2)}px;
background: repeating-linear-gradient(${p => (p.$vertical ? "180deg" : "90deg")}, #777 0 2px, transparent 2px 4px);
`
const NavList = styled.nav`
display: flex;
flex: 1;
flex-direction: column;
`
const NavLink = styled.a`
display: flex;
flex: 1;
align-items: center;
gap: 6px;
padding-left: 11px;
color: ${p => (p.$active ? "#1a7bc9" : "#444")};
text-decoration: none;
`
const ShortcutRow = styled.div`
display: grid;
grid-template-columns: repeat(7, 1fr);
height: 48px;
padding-left: 22px;
`
const Splitter = styled.div`
display: flex;
align-items: center;
justify-content: center;
width: 12px;
`

const Main = styled.main`
display: flex;
flex: 1;
flex-direction: column;
min-width: 0;
border: solid #858585;
border-width: 2px 0 0 2px;
`
const ToolbarRow = styled.div`
display: flex;
align-items: center;
height: 43px;
padding: 0 4px 2px 5px;
`
const Grip = styled.i`
width: 2px;
height: 16px;
margin-right: 3px;
background: #c6c6c6;
`
const ToolButton = styled(PlainButton)`
width: 39px;
`
const DropButton = styled(PlainButton)`
width: 11px;
`
const ToolDivider = styled.i`
width: 1px;
height: 34px;
margin: 0 3px;
background: #cfcfcf;
`

const FormScroller = styled.div`
display: flex;
flex: 1;
border-top: 1px solid #d0d0d0;
`
const FormThumb = styled.div`
height: 374px;
margin-bottom: auto;
background: #cbcbcb;
`
const FormArea = styled.div`
display: flex;
flex: 1;
flex-direction: column;
min-width: 0;
padding: 2px 3px 0 2px;
`
const CodePanel = styled.div`
display: flex;
flex-direction: column;
gap: 2px;
padding: 1px;
border: 1px solid #dadada;
`
const CodeRow = styled.div`
display: flex;
align-items: center;
`
const CodeLabel = styled.label`
width: 148px;
padding-left: 3px;
`
const FieldBox = styled.div`
display: flex;
flex: 1;
min-height: 20px;
min-width: 0;
border: 1px solid #b2b2b2;
background: ${p => (p.$disabled ? "#f0f0f0" : "#fff")};
`
const CodeBox = styled(FieldBox)`
flex: none;
width: ${p => (p.$open ? 290 : 293)}px;
background: ${p => (p.$open ? "#fff" : "#f0f0f0")};
`
const TextBox = styled.input`
flex: 1;
width: 100%;
min-width: 0;
padding: 0 3px;
border: 0;
background: none;
color: #444;
text-align: ${p => (p.$right ? "right" : "left")};
`
const NameBox = styled(TextBox)`
padding: 0 2px;
`
const SelectBox = styled.select`
flex: 1;
min-width: 0;
padding: 0 2px;
border: ${p => (p.$focused ? "1px dotted #555" : "0")};
padding-left: ${p => (p.$focused ? 1 : 2)}px;
border-radius: 0;
background: none;
color: #444;
opacity: 1;
appearance: none;
`
const ArrowBox = styled.span`
display: flex;
align-items: center;
justify-content: center;
width: 15px;
border-left: 1px solid #c6c6c6;
background: #f0f0f0;
`
const ArrowButton = styled(PlainButton)`
width: 15px;
border-left: 1px solid #c6c6c6;
background: #f0f0f0;
`

const DetailPanel = styled.div`
display: grid;
grid-template-columns: minmax(0, 13fr) minmax(0, 18fr);
gap: 5px;
height: 378px;
margin-top: 4px;
padding: 2px 2px 3px;
border: 1px solid #dadada;
`
const Pane = styled.section`
display: flex;
flex-direction: column;
position: relative;
`
const PaneTabs = styled.div`
display: flex;
align-items: flex-end;
height: 22px;
`
const PaneTab = styled.button`
height: ${p => (p.$active ? 23 : 20)}px;
margin-bottom: ${p => (p.$active ? -1 : 0)}px;
padding: 0 9px;
border: 1px solid #b5b5b5;
border-bottom: 0;
background: #fdfdfd;
& + & {
    margin-left: -1px;
}
${p => p.$active && css`
    z-index: 1;
    padding-bottom: 2px;
`}
`
const PaneBody = styled.div`
flex: 1;
padding: 1px 1px 0;
border: 1px solid #b5b5b5;
`
const FieldGrid = styled.div`
display: grid;
grid-auto-rows: 1fr;
`
const LeftGrid = styled(FieldGrid)`
height: 325px;
`
const RightGrid = styled(FieldGrid)`
height: 195px;
`
const FieldRow = styled.div`
display: flex;
align-items: center;
`
const FieldLabel = styled.label`
width: 147px;
padding-left: 3px;
line-height: 20px;
white-space: nowrap;
background: ${p => (p.$selected ? "#7fb4e3" : "none")};
`
const CheckRow = styled.div`
display: flex;
align-items: center;
gap: 3px;
padding-left: 4px;
`
const CheckBox = styled.input`
width: 13px;
height: 13px;
margin: 0;
border: 1px solid #aaa;
background: #fff;
appearance: none;
&:checked {
    background: #0b71c1;
}
`
const Pointer = styled.svg`
position: absolute;
left: 209px;
top: 21px;
`
const ChannelPanel = styled.div`
display: flex;
align-items: flex-start;
flex: 1;
margin-top: 3px;
padding: 1px 1px 0;
border: 1px solid #dadada;
border-bottom: 0;
line-height: 20px;
`

const Dock = styled.div`
display: flex;
align-items: center;
height: 42px;
padding-bottom: 2px;
background: #0b71c1;
`
const DockButton = styled(PlainButton)`
width: ${p => (p.$narrow ? 31 : 37)}px;
${p => !p.$narrow && css`
    &:nth-child(even) {
        width: 38px;
    }
`}
`
const StatusBar = styled.footer`
display: flex;
align-items: center;
height: 28px;
border-top: 1px solid #d7e8f6;
background: #0b71c1;
`
const StatusItem = styled.span`
padding: 0 7px;
border-left: 1px solid #cfe3f4;
color: #fff;
font-weight: ${p => (p.$bold ? "bold" : "normal")};
line-height: 18px;
white-space: pre;
&:first-child {
    border-left: 0;
}
`
